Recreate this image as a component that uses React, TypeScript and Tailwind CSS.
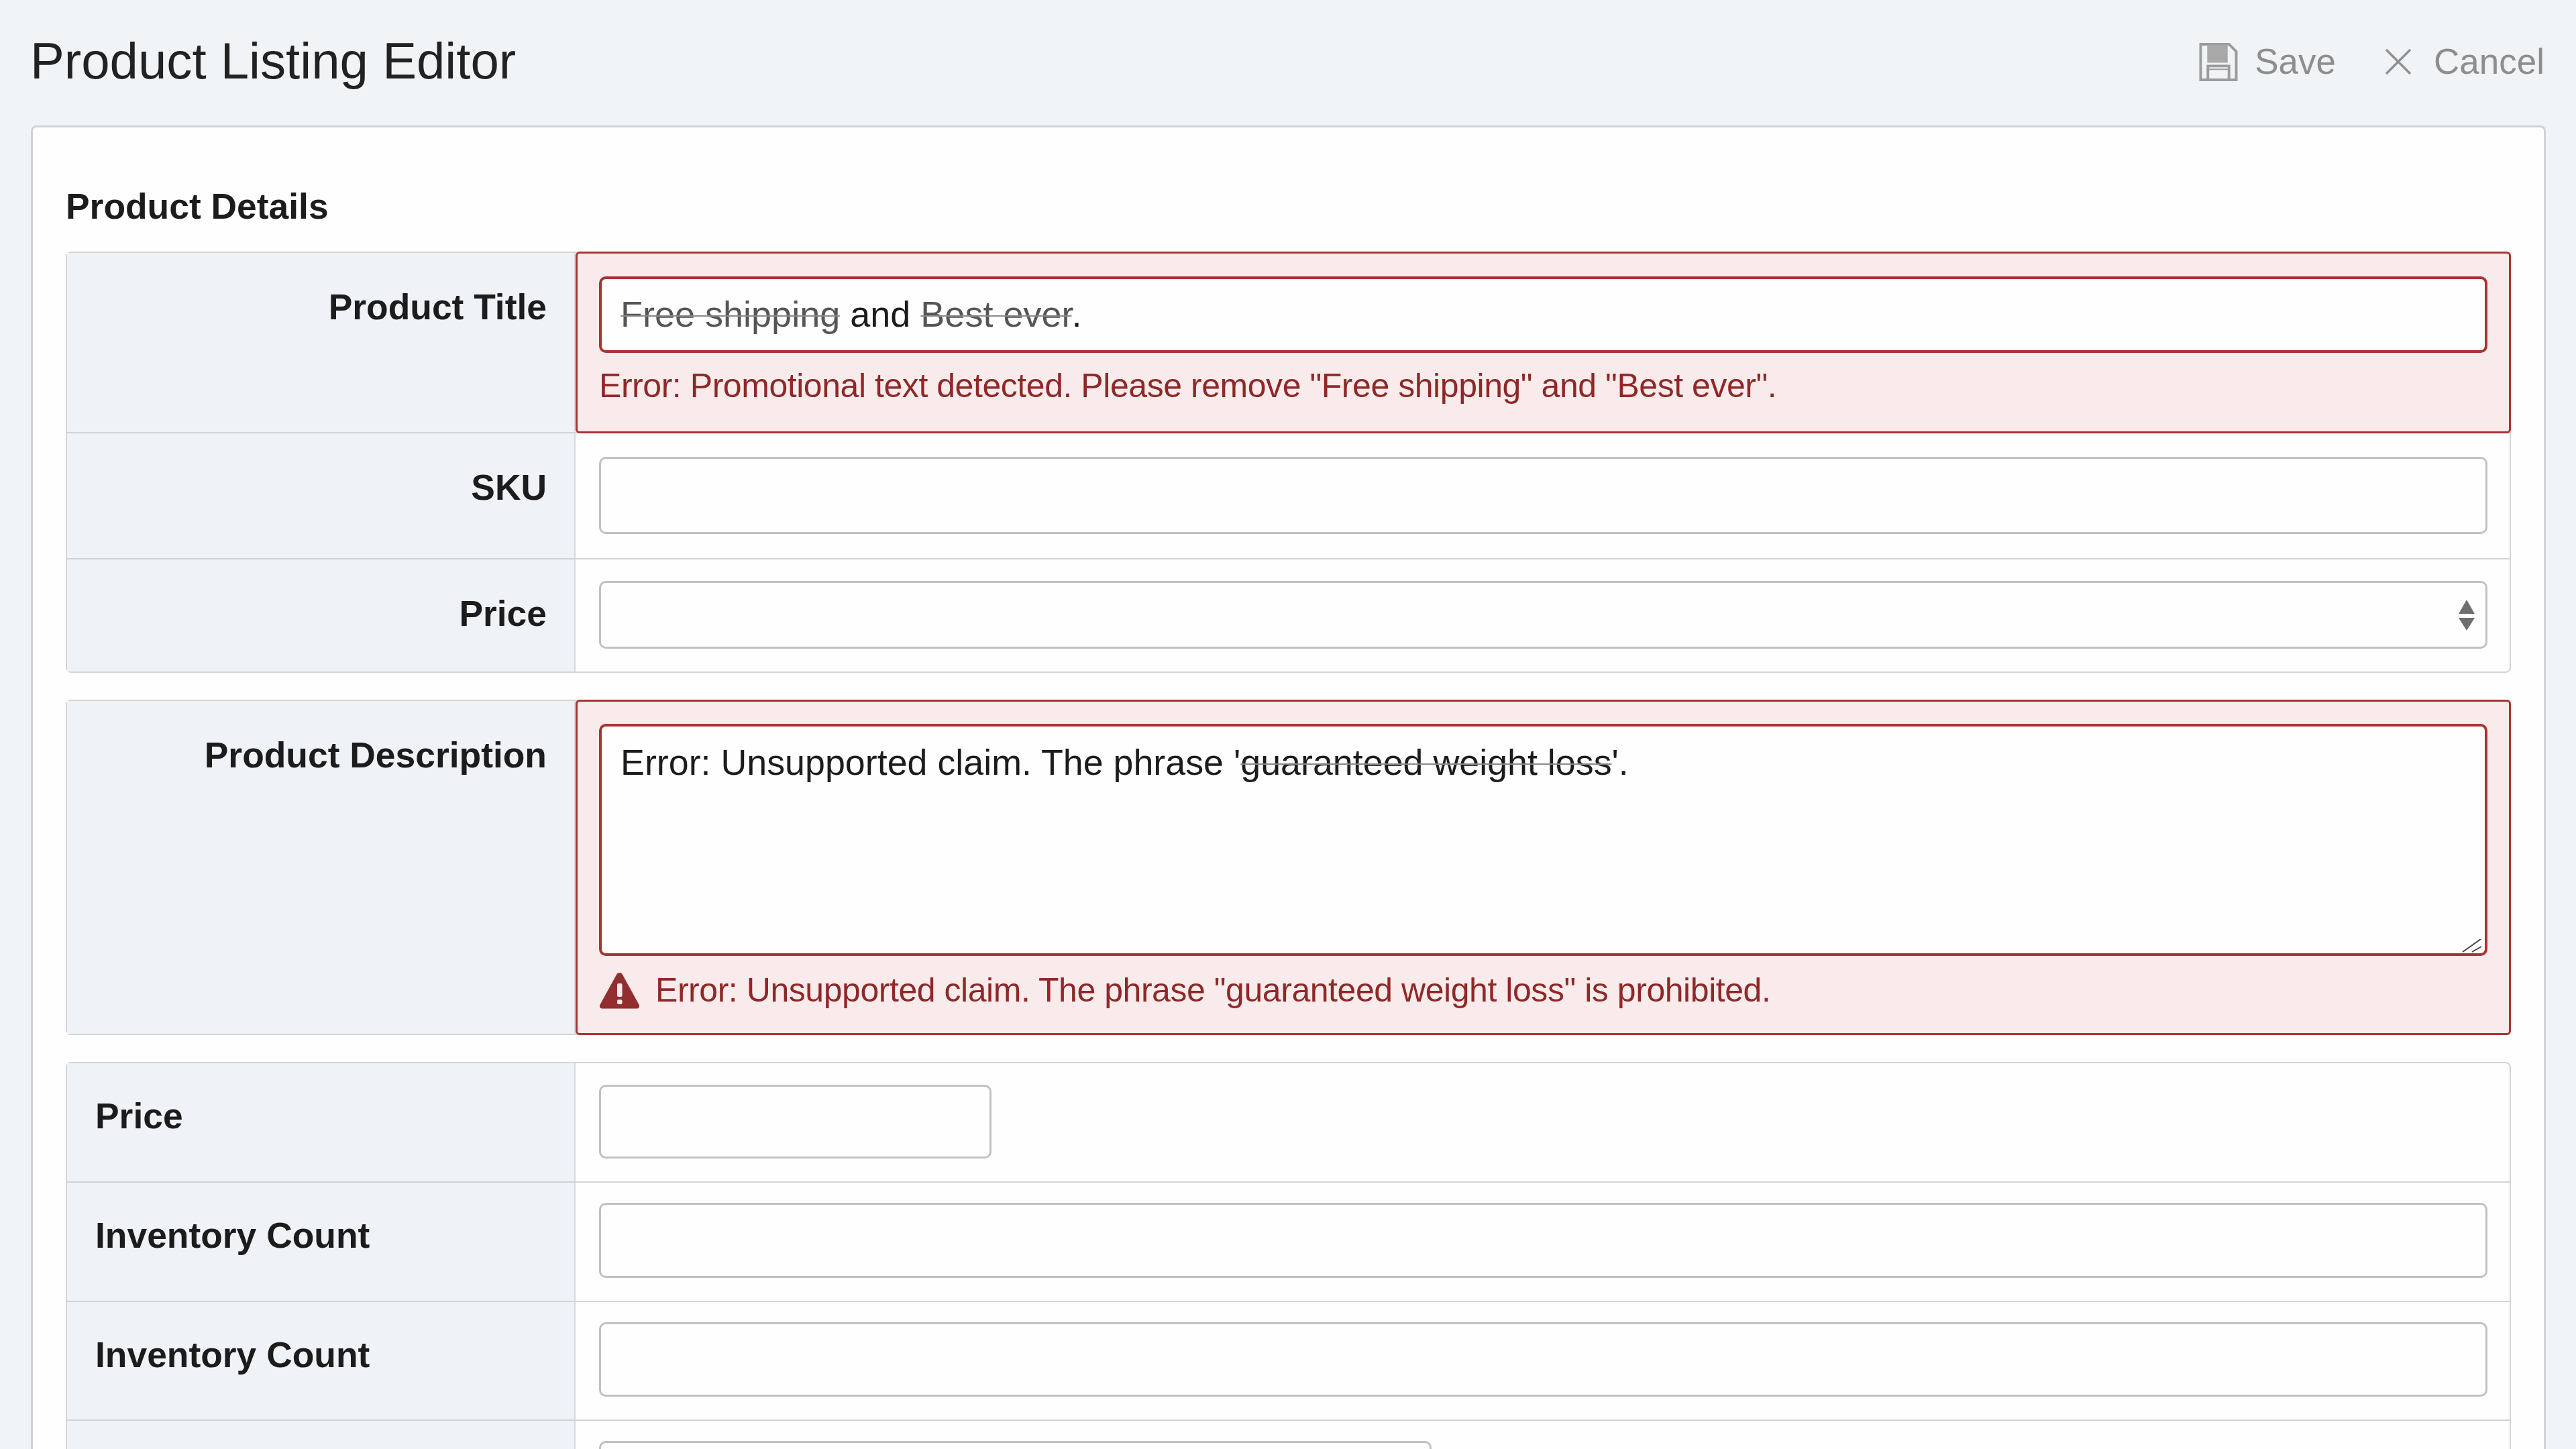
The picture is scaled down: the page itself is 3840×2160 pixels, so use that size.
import type { ReactNode } from "react";

const inputBase = "block rounded-[10px] bg-[#fefefe] outline-none";
const inputGray = `${inputBase} border-[3px] border-[#bfc1c3]`;
const inputRed = `${inputBase} border-[4px] border-[#a83434]`;
const struck = "line-through decoration-[#8a8a8a] decoration-2";

function SaveIcon() {
  return (
    <svg viewBox="0 0 58 58" className="h-[57px] w-[58px]" fill="none" aria-hidden="true">
      <path d="M2 2h43l11 11v43H2z" stroke="#9c9c9c" strokeWidth="4" fill="#f0f4f7" />
      <rect x="12" y="3" width="31" height="27" fill="#a8a8a8" />
      <path d="M13 54V35h32v19" stroke="#9c9c9c" strokeWidth="4" />
      <path d="M13 40h32" stroke="#9c9c9c" strokeWidth="2" />
    </svg>
  );
}

function CloseIcon() {
  return (
    <svg viewBox="0 0 40 40" className="h-[40px] w-[40px]" fill="none" aria-hidden="true">
      <path d="M2 2l36 36M38 2L2 38" stroke="#909090" strokeWidth="3.5" />
    </svg>
  );
}

function WarningIcon() {
  return (
    <svg viewBox="0 0 61 56" className="h-[56px] w-[61px] shrink-0" aria-hidden="true">
      <path
        d="M30.5 2c2 0 3.4 1 4.4 2.8l24.6 44.6c1.6 3 0 6.100-3.400 6.100H4.900c-3.400 0-5-3.100-3.400-6.100L26.100 4.800C27.100 3 28.500 2 30.500 2z"
        fill="#932e2e"
      />
      <rect x="27" y="18" width="7.500" height="20" rx="2" fill="#f9ebeb" />
      <rect x="27" y="42" width="7.500" height="7" rx="2.500" fill="#f9ebeb" />
    </svg>
  );
}

function SelectArrows() {
  return (
    <svg
      viewBox="0 0 24 46"
      className="pointer-events-none absolute right-[19px] top-[28px] h-[46px] w-[24px]"
      aria-hidden="true"
    >
      <path d="M12 0l12 21H0z" fill="#6e6e6e" />
      <path d="M0 27h24L12 46z" fill="#6e6e6e" />
    </svg>
  );
}

function ResizeHandle() {
  return (
    <svg
      viewBox="0 0 30 20"
      className="pointer-events-none absolute bottom-[5px] right-[8px] h-[20px] w-[30px]"
      fill="none"
      aria-hidden="true"
    >
      <path d="M1 19L28 0M15 19L29 11" stroke="#444" strokeWidth="2" />
    </svg>
  );
}

function Row({
  label,
  left,
  height,
  error,
  fieldTop,
  children,
  last,
}: {
  label?: string;
  left?: boolean;
  height: string;
  error?: boolean;
  fieldTop: string;
  children: ReactNode;
  last?: boolean;
}) {
  return (
    <div className={`flex ${height} ${last ? "" : "border-b-2 border-[#d2d4d6]"}`}>
      <div
        className={`w-[758px] shrink-0 border-r-2 border-[#d8dadc] bg-[#eff3f7] text-[53.4px] leading-[64px] font-bold text-[#1c1c1c] ${
          left ? "pt-[47px] pl-[42px] text-left" : "pt-[49px] pr-[41px] text-right"
        }`}
      >
        {label}
      </div>
      <div
        className={`min-w-0 flex-1 ${fieldTop} ${
          error
            ? "z-10 -my-[2px] -mr-[2px] rounded-[6px] border-[3px] border-[#a83434] bg-[#f9ebeb] pr-[32px] pl-[32px]"
            : "pr-[33px] pl-[35px]"
        }`}
      >
        {children}
      </div>
    </div>
  );
}

function Table({ children }: { children: ReactNode }) {
  return <div className="rounded-[8px] border-2 border-[#d2d4d6]">{children}</div>;
}

export default function App() {
  return (
    <div className="h-[2160px] overflow-hidden bg-[#f0f4f7] pr-[45px] pl-[46px] font-['Liberation_Sans',Arial,sans-serif] text-[#1c1c1c]">
      <header className="flex h-[187px] items-start justify-between pt-[48px] pr-[2px]">
        <h1 className="-ml-[1px] text-[76.2px] leading-[86px] font-normal text-[#222]">Product Listing Editor</h1>
        <div className="flex items-center pt-[14px] text-[53px] leading-[60px] text-[#8e8e8e]">
          <SaveIcon />
          <span className="ml-[25px]">Save</span>
          <span className="ml-[73px]">
            <CloseIcon />
          </span>
          <span className="ml-[33px]">Cancel</span>
        </div>
      </header>

      <main className="h-[2100px] rounded-[8px] border-[3px] border-[#cfd2d4] bg-[#fefefe] px-[49px] pt-[86px]">
        <h2 className="text-[53.4px] leading-[64px] font-bold text-[#1c1c1c]">Product Details</h2>
        <div className="mt-[35px] flex flex-col gap-[40px]">
          <Table>
            <Row label="Product Title" height="h-[269px]" fieldTop="pt-[34px]" error>
              <div className={`${inputRed} h-[114px] pl-[28px] text-[54px] leading-[104px] text-[#1c1c1c]`}>
                <span className={`text-[#555] ${struck}`}>Free shipping</span> and{" "}
                <span className={`text-[#555] ${struck}`}>Best ever</span>.
              </div>
              <p className="mt-[19px] text-[50px] leading-[60px] tracking-[-0.45px] text-[#8f2828]">
                Error: Promotional text detected. Please remove "Free shipping" and "Best ever".
              </p>
            </Row>
            <Row label="SKU" height="h-[188px]" fieldTop="pt-[35px]">
              <input className={`${inputGray} h-[115px] w-full`} />
            </Row>
            <Row label="Price" height="h-[167px]" fieldTop="pt-[32px]" last>
              <div className="relative">
                <select className={`${inputGray} h-[101px] w-full appearance-none`} />
                <SelectArrows />
              </div>
            </Row>
          </Table>

          <Table>
            <Row label="Product Description" height="h-[496px]" fieldTop="pt-[33px]" error last>
              <div className="relative">
                <div className={`${inputRed} h-[346px] pt-[21px] pl-[28px] text-[53.8px] leading-[64px] text-[#1c1c1c]`}>
                  Error: Unsupported claim. The phrase '
                  <span className={struck}>guaranteed weight loss</span>'.
                </div>
                <ResizeHandle />
              </div>
              <div className="mt-[21px] flex items-center gap-[23px]">
                <WarningIcon />
                <p className="text-[50px] leading-[60px] tracking-[-0.45px] text-[#8f2828]">
                  Error: Unsupported claim. The phrase "guaranteed weight loss" is prohibited.
                </p>
              </div>
            </Row>
          </Table>

          <Table>
            <Row label="Price" left height="h-[178px]" fieldTop="pt-[32px]">
              <input className={`${inputGray} h-[110px] w-[585px]`} />
            </Row>
            <Row label="Inventory Count" left height="h-[178px]" fieldTop="pt-[30px]">
              <input className={`${inputGray} h-[112px] w-full`} />
            </Row>
            <Row label="Inventory Count" left height="h-[177px]" fieldTop="pt-[30px]">
              <input className={`${inputGray} h-[111px] w-full`} />
            </Row>
            <Row left height="h-[178px]" fieldTop="pt-[30px]" last>
              <input className={`${inputGray} h-[112px] w-[1241px]`} />
            </Row>
          </Table>
        </div>
      </main>
    </div>
  );
}
